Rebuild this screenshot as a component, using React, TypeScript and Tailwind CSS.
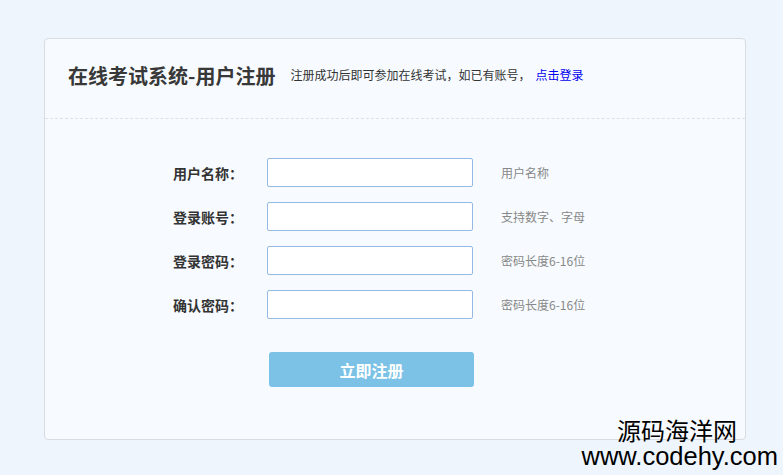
import React from "react";

const cjk = { fontFamily: '"Noto Sans CJK SC", "Noto Sans", sans-serif' };

function Row({ label, hint }: { label: string; hint: string }) {
  return (
    <div className="flex items-center h-[29px]">
      <div className="w-[198px] text-right text-[14px] font-bold text-[#333] leading-none">{label}</div>
      <input className="ml-[24px] w-[206px] h-[29px] bg-white border border-[#94b9e6] rounded-[2px] outline-none" />
      <div className="ml-[28px] text-[12px] text-[#888] leading-none">{hint}</div>
    </div>
  );
}

export default function App() {
  return (
    <div className="relative w-[783px] h-[475px] bg-[#eef5fd] overflow-hidden" style={cjk}>
      <div className="absolute left-[44px] top-[38px] w-[702px] h-[402px] bg-[#f7fbff] border border-[#d8dce1] rounded-[4px] flex flex-col">
        <div className="h-[80px] flex items-center border-b border-dashed border-[#dde2e8] pl-[23px] pb-[6px]">
          <div className="text-[20px] font-bold text-[#383838] leading-none">在线考试系统-用户注册</div>
          <div className="ml-[15px] mb-[2px] text-[12px] text-[#333] leading-none">注册成功后即可参加在线考试，如已有账号，</div>
          <a className="ml-[5px] mb-[2px] text-[12px] text-[#0000ee] leading-none">点击登录</a>
        </div>
        <div className="pt-[39px] flex flex-col gap-[15px]">
          <Row label="用户名称：" hint="用户名称" />
          <Row label="登录账号：" hint="支持数字、字母" />
          <Row label="登录密码：" hint="密码长度6-16位" />
          <Row label="确认密码：" hint="密码长度6-16位" />
        </div>
        <div className="mt-[33px] pl-[224px]">
          <button className="w-[205px] h-[35px] bg-[#7bc2e6] rounded-[3px] text-white text-[16px] font-bold">立即注册</button>
        </div>
      </div>
      <div className="absolute right-[46px] top-[418px] text-[24px] text-black leading-[24px]">源码海洋网</div>
      <div className="absolute right-[5px] top-[443px] text-[25.5px] text-black leading-[26px]" style={{ fontFamily: '"Liberation Sans", Arial, sans-serif' }}>www.codehy.com</div>
    </div>
  );
}
